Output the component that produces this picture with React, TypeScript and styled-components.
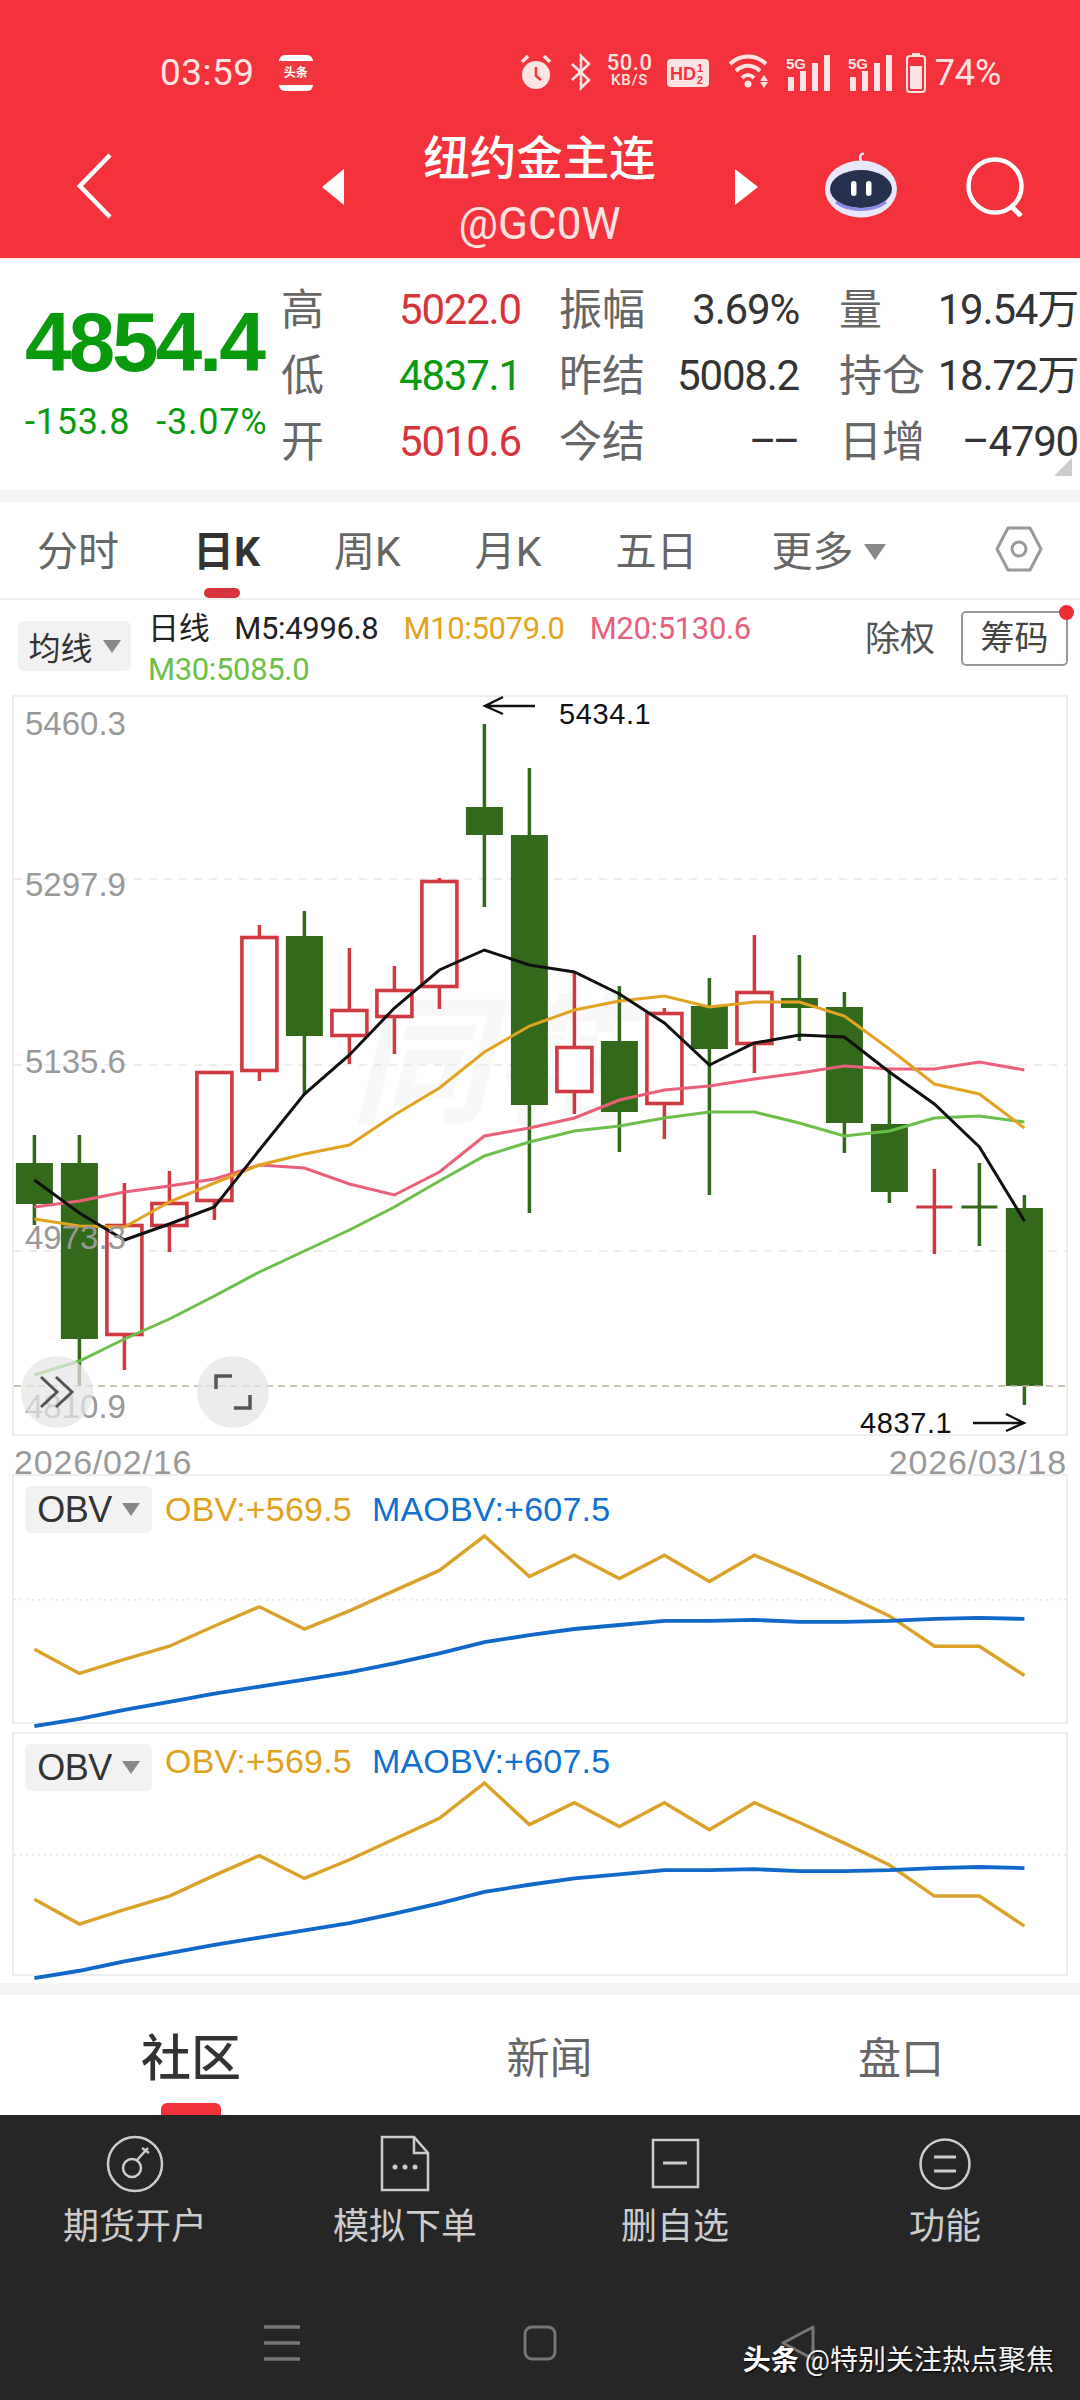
import React from "react";
import styled, { createGlobalStyle } from "styled-components";

const FONT = `Roboto, "Noto Sans CJK SC", sans-serif`;
const ARIAL = `"Liberation Sans", "Noto Sans CJK SC", sans-serif`;

const RED = "#f3323b";
const UP = "#d8343c";
const DOWN = "#099a0e";
const CANDLE_UP = "#cf3a41";
const CANDLE_DOWN = "#33691a";

const GlobalStyle = createGlobalStyle`
  html, body { margin: 0; padding: 0; background: #fff; }
  #root { width: 1080px; height: 2400px; overflow: hidden; }
  * { box-sizing: border-box; }
`;

const Page = styled.div`
  width: 1080px;
  height: 2400px;
  display: flex;
  flex-direction: column;
  font-family: ${FONT};
  background: #fff;
`;

/* 顶部红色区域 */
const Header = styled.header`
  height: 258px;
  background: ${RED};
  color: #fff;
`;

const StatusBar = styled.div`
  height: 112px;
  padding: 53px 0 0 160px;
  display: flex;
  align-items: flex-start;
  color: #fde3e3;
`;

const Clock = styled.span`
  font-size: 37px;
  line-height: 40px;
  letter-spacing: 0.5px;
`;

const NewsBadge = styled.div`
  width: 34px;
  height: 36px;
  margin: 2px 0 0 24px;
  border-radius: 6px;
  background: linear-gradient(#fff 0 18%, #ee3a3e 18% 82%, #fff 82%);
  color: #fff;
  font-size: 12px;
  line-height: 36px;
  font-weight: 700;
  text-align: center;
  white-space: nowrap;
`;

const StatusIcons = styled.div`
  margin-left: 207px;
  display: flex;
  align-items: flex-start;
`;

const NetSpeed = styled.div`
  width: 52px;
  margin-left: 11px;
  text-align: center;
  font-size: 22px;
  line-height: 19px;
  font-weight: 500;
  letter-spacing: 0.6px;
  white-space: nowrap;
  & > small {
    display: block;
    font-size: 15px;
    line-height: 17px;
    letter-spacing: 0.8px;
  }
`;

const Percent = styled.span`
  font-size: 36px;
  line-height: 40px;
  margin-left: 9px;
`;

const TitleRow = styled.div`
  height: 146px;
  padding-left: 77px;
  display: flex;
  align-items: flex-start;
`;

const TitleBlock = styled.div`
  width: 391px;
  padding-top: 23px;
  text-align: center;
`;

const Title = styled.div`
  font-size: 46.5px;
  line-height: 48px;
  font-weight: 500;
  white-space: nowrap;
`;

const SubTitle = styled.div`
  margin-top: 16px;
  font-size: 44px;
  line-height: 50px;
  color: #fbe3e3;
`;

const TopLine = styled.div`
  height: 2px;
  background: #faf1ef;
`;

/* 行情数字 */
const Quote = styled.section`
  height: 230px;
  padding-left: 25px;
  display: flex;
  position: relative;
`;

const QuoteMain = styled.div`
  width: 256px;
  padding-top: 42px;
  color: ${DOWN};
`;

const LastPrice = styled.div`
  font-size: 84px;
  line-height: 80px;
  font-weight: 700;
  letter-spacing: -3.2px;
  font-family: ${ARIAL};
  white-space: nowrap;
`;

const QuoteChange = styled.div`
  margin-top: 20px;
  display: flex;
  gap: 26px;
  font-size: 36px;
  line-height: 40px;
  letter-spacing: 0.8px;
  white-space: nowrap;
`;

const QuoteGrid = styled.div`
  padding-top: 17px;
  display: grid;
  grid-template-columns: 118px 160px 87px 193px 84px 155px;
  grid-auto-rows: 66px;
  align-items: center;
`;

const FieldLabel = styled.span`
  font-size: 43px;
  line-height: 66px;
  color: #666;
  white-space: nowrap;
`;

const FieldValue = styled.span<{ $color?: string; $gutter?: number }>`
  font-size: 42px;
  line-height: 66px;
  letter-spacing: -1.2px;
  word-spacing: -12px;
  color: ${(p) => p.$color || "#333"};
  text-align: ${(p) => (p.$color ? "left" : "right")};
  padding-right: ${(p) => p.$gutter || 0}px;
  white-space: nowrap;
`;

const CornerMark = styled.div`
  position: absolute;
  right: 8px;
  bottom: 14px;
  width: 0;
  height: 0;
  border-left: 18px solid transparent;
  border-bottom: 18px solid #ccc;
`;

const Band = styled.div`
  height: 12px;
  background: #f5f5f5;
`;

/* 周期切换 */
const PeriodTabs = styled.nav`
  height: 98px;
  padding: 4px 37px 0 37px;
  display: flex;
  align-items: center;
  gap: 74px;
  border-bottom: 2px solid #eee;
`;

const PeriodTab = styled.span<{ $active?: boolean }>`
  position: relative;
  font-size: 41px;
  line-height: 60px;
  color: ${(p) => (p.$active ? "#333" : "#666")};
  font-weight: ${(p) => (p.$active ? 700 : 400)};
  white-space: nowrap;
  &::after {
    content: "";
    display: ${(p) => (p.$active ? "block" : "none")};
    position: absolute;
    left: 11px;
    bottom: -16px;
    width: 36px;
    height: 10px;
    border-radius: 5px;
    background: ${UP};
  }
`;

const Caret = styled.i<{ $size?: number }>`
  display: inline-block;
  width: 0;
  height: 0;
  border-left: ${(p) => (p.$size || 10)}px solid transparent;
  border-right: ${(p) => (p.$size || 10)}px solid transparent;
  border-top: ${(p) => ((p.$size || 10) * 3) / 2}px solid #888;
`;

const MoreGroup = styled.span`
  display: flex;
  align-items: center;
  gap: 10px;
`;

const SettingsIcon = styled.svg`
  margin-left: auto;
  flex: none;
  margin-top: -6px;
`;

/* 均线图例 */
const LegendBar = styled.div`
  height: 95px;
  padding: 0 12px 0 18px;
  display: flex;
  align-items: flex-start;
`;

const SelectChip = styled.div<{ $w: number; $h: number; $mt: number; $fs?: number }>`
  width: ${(p) => p.$w}px;
  height: ${(p) => p.$h}px;
  margin-top: ${(p) => p.$mt}px;
  flex: none;
  border-radius: 6px;
  background: #f2f2f2;
  display: flex;
  align-items: center;
  justify-content: center;
  gap: 10px;
  font-size: ${(p) => p.$fs || 32}px;
  color: #333;
`;

const LegendText = styled.div`
  width: 680px;
  margin-left: 17px;
  padding-top: 8px;
  display: flex;
  flex-wrap: wrap;
  column-gap: 25px;
  font-size: 31px;
  line-height: 41px;
`;

const LegendItem = styled.span<{ $color: string }>`
  color: ${(p) => p.$color};
  white-space: nowrap;
  letter-spacing: -0.35px;
`;

const RightsLabel = styled.span`
  margin: 18px 0 0 auto;
  font-size: 35px;
  line-height: 44px;
  color: #555;
`;

const ChipButton = styled.div`
  position: relative;
  width: 107px;
  height: 55px;
  margin: 11px 0 0 26px;
  border: 2px solid #999;
  border-radius: 5px;
  font-size: 34px;
  line-height: 50px;
  text-align: center;
  color: #444;
  white-space: nowrap;
  &::after {
    content: "";
    position: absolute;
    top: -8px;
    right: -8px;
    width: 15px;
    height: 15px;
    border-radius: 50%;
    background: #ee2c35;
  }
`;

const ChartWrap = styled.div`
  padding: 0 12px;
`;

const KlineBox = styled.div`
  position: relative;
  width: 1056px;
  height: 741px;
  border: 2px solid #eee;
`;

const FullSvg = styled.svg`
  display: block;
  width: 100%;
  height: 100%;
  overflow: visible;
`;

const AxisLabel = styled.text`
  font-family: ${ARIAL};
  font-size: 33px;
  fill: #999;
`;

const ExtremeLabel = styled.text`
  font-family: ${ARIAL};
  font-size: 29px;
  letter-spacing: 0.6px;
  fill: #111;
`;

const WaterMark = styled.text`
  font-family: ${FONT};
  font-size: 140px;
  font-weight: 700;
  font-style: italic;
  fill: #f8f8f8;
`;

const RoundTool = styled.div<{ $left: number }>`
  position: absolute;
  left: ${(p) => p.$left}px;
  top: 659px;
  width: 72px;
  height: 72px;
  border-radius: 50%;
  background: rgba(228, 228, 228, 0.72);
  display: flex;
  align-items: center;
  justify-content: center;
`;

const DateRow = styled.div`
  height: 38px;
  padding: 8px 13px 0 14px;
  display: flex;
  justify-content: space-between;
  font-family: ${ARIAL};
  font-size: 34px;
  line-height: 36px;
  letter-spacing: 0.8px;
  color: #999;
`;

const IndicatorPane = styled.div<{ $h: number; $gap: number }>`
  height: ${(p) => p.$h}px;
  margin-bottom: ${(p) => p.$gap}px;
  border: 2px solid #eee;
  display: flex;
  flex-direction: column;
`;

const PaneLegend = styled.div<{ $shift: number }>`
  height: 56px;
  flex: none;
  padding-left: 11px;
  display: flex;
  align-items: flex-start;
  font-family: ${ARIAL};
  font-size: 34px;
  & > span {
    margin-top: ${(p) => p.$shift}px;
    line-height: 40px;
    white-space: nowrap;
  }
`;

const ObvName = styled.span`
  font-size: 36px;
  line-height: 47px;
  letter-spacing: -0.5px;
`;

const PaneValue = styled.span<{ $color: string; $ml: number }>`
  color: ${(p) => p.$color};
  margin-left: ${(p) => p.$ml}px;
  letter-spacing: 0.2px;
`;

const PaneSvg = styled.svg`
  display: block;
  flex: 1;
  min-height: 0;
  width: 100%;
  overflow: visible;
`;

/* 底部资讯切换 */
const NewsTabs = styled.nav`
  height: 120px;
  padding: 0 136px 0 141px;
  display: flex;
  justify-content: space-between;
  align-items: center;
`;

const NewsTab = styled.span<{ $active?: boolean }>`
  position: relative;
  height: 120px;
  padding-top: 34px;
  font-size: ${(p) => (p.$active ? 50 : 43)}px;
  line-height: 60px;
  font-weight: ${(p) => (p.$active ? 500 : 400)};
  color: ${(p) => (p.$active ? "#333" : "#666")};
  &::after {
    content: "";
    display: ${(p) => (p.$active ? "block" : "none")};
    position: absolute;
    left: 20px;
    bottom: 0;
    width: 60px;
    height: 12px;
    border-radius: 6px 6px 0 0;
    background: #f2323b;
  }
`;

const Dock = styled.footer`
  position: relative;
  flex: 1;
  background: #262626;
  color: #ccc;
`;

const DockGrid = styled.div`
  padding-top: 20px;
  display: grid;
  grid-template-columns: repeat(4, 270px);
`;

const DockItem = styled.div`
  display: flex;
  flex-direction: column;
  align-items: center;
`;

const DockIcon = styled.svg`
  display: block;
`;

const DockLabel = styled.span`
  margin-top: 12px;
  font-size: 36px;
  line-height: 44px;
  color: #ccc;
`;

const NavBar = styled.div`
  margin-top: 76px;
  padding-left: 264px;
  display: flex;
  gap: 223px;
`;

const Signature = styled.div`
  position: absolute;
  right: 26px;
  bottom: 21px;
  font-size: 28px;
  line-height: 36px;
  color: #f2f2f2;
  text-shadow: 1px 1px 2px #000;
  white-space: nowrap;
  & > b {
    color: #fff;
    font-weight: 700;
    margin-right: 6px;
  }
`;

// [wickTop, bodyTop, bodyBottom, wickBottom, up?]
type Candle = [number, number, number, number, boolean];

const candles: Candle[] = [
  [1135, 1163, 1204, 1225, false],
  [1135, 1163, 1339, 1386, false],
  [1183, 1224, 1336, 1370, true],
  [1171, 1202, 1227, 1252, true],
  [1071, 1071, 1202, 1220, true],
  [925, 936, 1072, 1081, true],
  [911, 936, 1036, 1095, false],
  [948, 1009, 1037, 1064, true],
  [966, 989, 1018, 1054, true],
  [878, 880, 988, 1009, true],
  [724, 807, 835, 907, false],
  [768, 835, 1105, 1213, false],
  [972, 1046, 1093, 1114, true],
  [986, 1041, 1112, 1152, false],
  [1008, 1012, 1105, 1139, true],
  [978, 1006, 1049, 1195, false],
  [935, 991, 1045, 1073, true],
  [955, 998, 1008, 1041, false],
  [992, 1007, 1123, 1153, false],
  [1070, 1124, 1192, 1203, false],
  [1169, 1207, 1207, 1254, true],
  [1163, 1207, 1207, 1246, false],
  [1195, 1208, 1386, 1405, false],
];

const m5 = [1180, 1213, 1240, 1224, 1207, 1150, 1094, 1055, 1008, 970, 950, 965, 972, 994, 1023, 1065, 1043, 1035, 1037, 1072, 1104, 1147, 1221];
const m10 = [1219, 1226, 1227, 1202, 1183, 1165, 1154, 1145, 1115, 1088, 1052, 1026, 1010, 1001, 996, 1007, 1002, 1002, 1016, 1049, 1084, 1094, 1128];
const m20 = [1207, 1201, 1192, 1186, 1179, 1165, 1168, 1184, 1195, 1172, 1136, 1128, 1118, 1100, 1090, 1086, 1079, 1073, 1066, 1069, 1069, 1062, 1070];
const m30 = [1375, 1361, 1339, 1319, 1296, 1272, 1251, 1230, 1207, 1181, 1156, 1142, 1131, 1126, 1118, 1112, 1112, 1123, 1136, 1131, 1118, 1116, 1122];

const obv = [1648, 1672, 1658, 1645, 1625, 1606, 1628, 1610, 1590, 1570, 1536, 1576, 1555, 1578, 1555, 1581, 1555, 1574, 1594, 1615, 1645, 1645, 1674];
const maobv = [1724, 1717, 1708, 1700, 1692, 1685, 1678, 1671, 1662, 1652, 1641, 1634, 1628, 1624, 1620, 1620, 1619, 1621, 1621, 1620, 1618, 1617, 1618];

const candleX = (i: number) => 34.4 + 45 * i;

const toPoints = (ys: number[], mapY: (y: number) => number, mapX: (x: number) => number = (x) => x) =>
  ys.map((y, i) => `${mapX(candleX(i)).toFixed(1)},${mapY(y).toFixed(1)}`).join(" ");

const KlineChart: React.FC = () => (
  <FullSvg viewBox="14 697 1052 737">
    <WaterMark x="350" y="1112">同花</WaterMark>
    {[879, 1065, 1251].map((y) => (
      <line key={y} x1="14" x2="1066" y1={y} y2={y} stroke="#e8e8e8" strokeWidth="1.5" strokeDasharray="8 7" />
    ))}
    {candles.map(([wt, bt, bb, wb, up], i) => {
      const x = candleX(i);
      const color = up ? CANDLE_UP : CANDLE_DOWN;
      return (
        <g key={i}>
          <line x1={x} x2={x} y1={wt} y2={bt} stroke={color} strokeWidth="3.5" />
          <line x1={x} x2={x} y1={bb} y2={wb} stroke={color} strokeWidth="3.5" />
          {bt === bb ? (
            <line x1={x - 18} x2={x + 18} y1={bt} y2={bt} stroke={color} strokeWidth="3" />
          ) : up ? (
            <rect x={x - 17.5} y={bt + 1.5} width="35" height={bb - bt - 3} fill="#fff" stroke={color} strokeWidth="3.6" />
          ) : (
            <rect x={x - 18.5} y={bt} width="37" height={bb - bt} fill={color} />
          )}
        </g>
      );
    })}
    <line x1="14" x2="1066" y1="1386" y2="1386" stroke="#b8b59c" strokeWidth="1.5" strokeDasharray="7 5" />
    <polyline points={toPoints(m30, (y) => y)} fill="none" stroke="#6cc04a" strokeWidth="3" />
    <polyline points={toPoints(m20, (y) => y)} fill="none" stroke="#ea5f7a" strokeWidth="3" />
    <polyline points={toPoints(m10, (y) => y)} fill="none" stroke="#e2a322" strokeWidth="3" />
    <polyline points={toPoints(m5, (y) => y)} fill="none" stroke="#111" strokeWidth="3" />

    <AxisLabel x="25" y="735">5460.3</AxisLabel>
    <AxisLabel x="25" y="896">5297.9</AxisLabel>
    <AxisLabel x="25" y="1073">5135.6</AxisLabel>
    <AxisLabel x="25" y="1249">4973.3</AxisLabel>
    <AxisLabel x="25" y="1418">4810.9</AxisLabel>

    <path d="M535 706 H485 M503 697 L485 706 L503 714" fill="none" stroke="#111" strokeWidth="2.4" />
    <ExtremeLabel x="559" y="724">5434.1</ExtremeLabel>
    <ExtremeLabel x="860" y="1433">4837.1</ExtremeLabel>
    <path d="M973 1423 H1024 M1006 1414 L1024 1423 L1006 1431" fill="none" stroke="#111" strokeWidth="2.4" />
  </FullSvg>
);

const ObvPane: React.FC<{ h: number; gap: number; scale: number; gridY: number; shift: number }> = ({ h, gap, scale, gridY, shift }) => {
  // 两个副图数据相同，只是纵向比例略有差别
  const mapY = (y: number) => h - (1724 - y) * scale;
  const mapX = (x: number) => x - 14;
  return (
    <IndicatorPane $h={h} $gap={gap}>
      <PaneLegend $shift={shift}>
        <SelectChip $w={127} $h={47} $mt={10} $fs={36}>
          <ObvName>OBV</ObvName>
          <Caret $size={9} />
        </SelectChip>
        <PaneValue $color="#e0a21c" $ml={13}>OBV:+569.5</PaneValue>
        <PaneValue $color="#1070d0" $ml={20}>MAOBV:+607.5</PaneValue>
      </PaneLegend>
      <PaneSvg viewBox={`0 58 1052 ${h - 62}`} preserveAspectRatio="none">
        <line x1="0" x2="1052" y1={gridY} y2={gridY} stroke="#e4e4e4" strokeWidth="1.5" strokeDasharray="2 4" />
        <polyline points={toPoints(obv, mapY, mapX)} fill="none" stroke="#dba229" strokeWidth="3.4" />
        <polyline points={toPoints(maobv, mapY, mapX)} fill="none" stroke="#1068c8" strokeWidth="3.8" />
      </PaneSvg>
    </IndicatorPane>
  );
};

const Signal: React.FC<{ ml: number }> = ({ ml }) => (
  <svg width="46" height="40" viewBox="0 0 46 40" style={{ marginLeft: ml }}>
    <text x="0" y="16" fontSize="15" fontWeight="700" fontFamily={ARIAL} fill="#fde3e3">5G</text>
    <g fill="#fde3e3">
      <rect x="2" y="24" width="6" height="14" />
      <rect x="14" y="18" width="6" height="20" />
      <rect x="26" y="10" width="6" height="28" />
      <rect x="38" y="2" width="6" height="36" />
    </g>
  </svg>
);

const App: React.FC = () => {
  return (
    <Page>
      <GlobalStyle />
      <Header>
        <StatusBar>
          <Clock>03:59</Clock>
          <NewsBadge>头条</NewsBadge>
          <StatusIcons>
            {/* alarm */}
            <svg width="32" height="38" viewBox="0 0 32 38">
              <circle cx="16" cy="22" r="14" fill="#fde3e3" />
              <path d="M16 14v9l5 4" fill="none" stroke={RED} strokeWidth="2.5" />
              <path d="M2 9 8 3M30 9 24 3" stroke="#fde3e3" strokeWidth="3.5" />
            </svg>
            {/* bluetooth */}
            <svg width="24" height="38" viewBox="0 0 24 38" style={{ marginLeft: 17 }}>
              <path d="M3 11 20 27 12 35V3L20 11 3 27" fill="none" stroke="#fde3e3" strokeWidth="2.6" />
            </svg>
            <NetSpeed>
              50.0
              <small>KB/S</small>
            </NetSpeed>
            {/* HD */}
            <svg width="42" height="30" viewBox="0 0 42 30" style={{ marginLeft: 11, marginTop: 6 }}>
              <rect width="42" height="28" rx="4" fill="#fde3e3" />
              <text x="3" y="21" fontSize="18" fontWeight="700" fontFamily={ARIAL} fill={RED}>HD</text>
              <text x="30" y="13" fontSize="11" fontWeight="700" fontFamily={ARIAL} fill={RED}>1</text>
              <text x="30" y="25" fontSize="11" fontWeight="700" fontFamily={ARIAL} fill={RED}>2</text>
            </svg>
            {/* wifi */}
            <svg width="44" height="36" viewBox="0 0 44 36" style={{ marginLeft: 19 }}>
              <g fill="none" stroke="#fde3e3" strokeWidth="4">
                <path d="M2 11C12 1 28 1 38 11" />
                <path d="M8 18C15 11 25 11 32 18" />
                <path d="M14 25C18 21 22 21 26 25" />
              </g>
              <circle cx="20" cy="31" r="3.5" fill="#fde3e3" />
              <path d="M36 22l4 6h-8zM32 29h8l-4 6z" fill="#fde3e3" />
            </svg>
            <Signal ml={14} />
            <Signal ml={16} />
            {/* battery */}
            <svg width="20" height="40" viewBox="0 0 20 40" style={{ marginLeft: 12 }}>
              <rect x="6" y="0" width="8" height="3" fill="#fde3e3" />
              <rect x="1" y="3" width="18" height="36" rx="3" fill="none" stroke="#fde3e3" strokeWidth="2" />
              <rect x="4" y="13" width="12" height="23" rx="1" fill="#fde3e3" />
            </svg>
            <Percent>74%</Percent>
          </StatusIcons>
        </StatusBar>
        <TitleRow>
          <svg width="35" height="66" viewBox="0 0 35 66" style={{ marginTop: 41 }}>
            <path d="M33 2 3 33 33 64" fill="none" stroke="#fff" strokeWidth="4.5" />
          </svg>
          <svg width="22" height="36" viewBox="0 0 22 36" style={{ marginLeft: 210, marginTop: 57 }}>
            <path d="M22 0V36L0 18Z" fill="#fff" />
          </svg>
          <TitleBlock>
            <Title>纽约金主连</Title>
            <SubTitle>@GC0W</SubTitle>
          </TitleBlock>
          <svg width="23" height="36" viewBox="0 0 23 36" style={{ marginTop: 57 }}>
            <path d="M0 0V36L23 18Z" fill="#fff" />
          </svg>
          {/* robot */}
          <svg width="72" height="66" viewBox="0 0 72 66" style={{ marginLeft: 67, marginTop: 40 }}>
            <path d="M36 9C34 4 36 1 39 2" fill="none" stroke="#e8e6ff" strokeWidth="2.5" />
            <ellipse cx="36" cy="37" rx="36" ry="28.5" fill="#e9e7fb" />
            <ellipse cx="36" cy="37" rx="31" ry="19" fill="#263150" />
            <path d="M11 50C24 60 48 60 61 50" fill="none" stroke="#8c8ae8" strokeWidth="3" />
            <rect x="26" y="29" width="5.5" height="15" rx="2.7" fill="#fff" />
            <rect x="41" y="29" width="5.5" height="15" rx="2.7" fill="#fff" />
          </svg>
          {/* search */}
          <svg width="60" height="60" viewBox="0 0 60 60" style={{ marginLeft: 69, marginTop: 45 }}>
            <circle cx="29" cy="29" r="26.5" fill="none" stroke="#fff" strokeWidth="4.5" />
            <path d="M44 48 55 59" stroke="#fff" strokeWidth="5" />
          </svg>
        </TitleRow>
      </Header>
      <TopLine />

      <Quote>
        <QuoteMain>
          <LastPrice>4854.4</LastPrice>
          <QuoteChange>
            <span>-153.8</span>
            <span>-3.07%</span>
          </QuoteChange>
        </QuoteMain>
        <QuoteGrid>
          <FieldLabel>高</FieldLabel>
          <FieldValue $color={UP}>5022.0</FieldValue>
          <FieldLabel>振幅</FieldLabel>
          <FieldValue $gutter={40}>3.69%</FieldValue>
          <FieldLabel>量</FieldLabel>
          <FieldValue>19.54万</FieldValue>

          <FieldLabel>低</FieldLabel>
          <FieldValue $color={DOWN}>4837.1</FieldValue>
          <FieldLabel>昨结</FieldLabel>
          <FieldValue $gutter={40}>5008.2</FieldValue>
          <FieldLabel>持仓</FieldLabel>
          <FieldValue>18.72万</FieldValue>

          <FieldLabel>开</FieldLabel>
          <FieldValue $color={UP}>5010.6</FieldValue>
          <FieldLabel>今结</FieldLabel>
          <FieldValue $gutter={40}>– –</FieldValue>
          <FieldLabel>日增</FieldLabel>
          <FieldValue>–4790</FieldValue>
        </QuoteGrid>
        <CornerMark />
      </Quote>
      <Band />

      <PeriodTabs>
        <PeriodTab>分时</PeriodTab>
        <PeriodTab $active>日K</PeriodTab>
        <PeriodTab>周K</PeriodTab>
        <PeriodTab>月K</PeriodTab>
        <PeriodTab>五日</PeriodTab>
        <MoreGroup>
          <PeriodTab>更多</PeriodTab>
          <Caret $size={11} />
        </MoreGroup>
        <SettingsIcon width="48" height="46" viewBox="0 0 48 46">
          <path d="M13 2H35L46 23 35 44H13L2 23Z" fill="none" stroke="#999" strokeWidth="3" strokeLinejoin="round" />
          <circle cx="24" cy="23" r="7" fill="none" stroke="#999" strokeWidth="3" />
        </SettingsIcon>
      </PeriodTabs>

      <LegendBar>
        <SelectChip $w={113} $h={50} $mt={21}>
          均线
          <Caret $size={9} />
        </SelectChip>
        <LegendText>
          <LegendItem $color="#222">日线</LegendItem>
          <LegendItem $color="#222">M5:4996.8</LegendItem>
          <LegendItem $color="#e2a322">M10:5079.0</LegendItem>
          <LegendItem $color="#e8607c">M20:5130.6</LegendItem>
          <LegendItem $color="#6cc04a">M30:5085.0</LegendItem>
        </LegendText>
        <RightsLabel>除权</RightsLabel>
        <ChipButton>筹码</ChipButton>
      </LegendBar>

      <ChartWrap>
        <KlineBox>
          <KlineChart />
          <RoundTool $left={7}>
            <svg width="36" height="34" viewBox="0 0 36 34">
              <path d="M2 2 18 17 2 32M17 2 33 17 17 32" fill="none" stroke="#555" strokeWidth="3" />
            </svg>
          </RoundTool>
          <RoundTool $left={183}>
            <svg width="38" height="38" viewBox="0 0 38 38">
              <path d="M2 16V3H18M36 22V35H20" fill="none" stroke="#555" strokeWidth="3.5" />
            </svg>
          </RoundTool>
        </KlineBox>
      </ChartWrap>
      <DateRow>
        <span>2026/02/16</span>
        <span>2026/03/18</span>
      </DateRow>
      <ChartWrap>
        <ObvPane h={250} gap={8} scale={1} gridY={125} shift={13} />
        <ObvPane h={244} gap={7} scale={1.026} gridY={122} shift={7} />
      </ChartWrap>
      <Band />

      <NewsTabs>
        <NewsTab $active>社区</NewsTab>
        <NewsTab>新闻</NewsTab>
        <NewsTab>盘口</NewsTab>
      </NewsTabs>

      <Dock>
        <DockGrid>
          <DockItem>
            <DockIcon width="58" height="58" viewBox="0 0 58 58">
              <circle cx="29" cy="29" r="27" fill="none" stroke="#ccc" strokeWidth="2.5" />
              <circle cx="26" cy="33" r="9" fill="none" stroke="#ccc" strokeWidth="2.5" />
              <path d="M31 25 42 13M36 13l7 5" fill="none" stroke="#ccc" strokeWidth="2.5" />
            </DockIcon>
            <DockLabel>期货开户</DockLabel>
          </DockItem>
          <DockItem>
            <DockIcon width="58" height="58" viewBox="0 0 58 58">
              <path d="M6 2H38L52 18V55H6Z" fill="none" stroke="#ccc" strokeWidth="2.5" />
              <path d="M38 2V18H52" fill="none" stroke="#ccc" strokeWidth="2.5" />
              <circle cx="19" cy="32" r="2.5" fill="#ccc" />
              <circle cx="29" cy="32" r="2.5" fill="#ccc" />
              <circle cx="39" cy="32" r="2.5" fill="#ccc" />
            </DockIcon>
            <DockLabel>模拟下单</DockLabel>
          </DockItem>
          <DockItem>
            <DockIcon width="58" height="58" viewBox="0 0 58 58">
              <rect x="7" y="5" width="45" height="47" fill="none" stroke="#ccc" strokeWidth="2.5" />
              <path d="M17 28H41" stroke="#ccc" strokeWidth="3" />
            </DockIcon>
            <DockLabel>删自选</DockLabel>
          </DockItem>
          <DockItem>
            <DockIcon width="58" height="58" viewBox="0 0 58 58">
              <circle cx="29" cy="29" r="24.5" fill="none" stroke="#ccc" strokeWidth="2.5" />
              <path d="M18 22H40M18 36H40" stroke="#ccc" strokeWidth="3" />
            </DockIcon>
            <DockLabel>功能</DockLabel>
          </DockItem>
        </DockGrid>
        <NavBar>
          <svg width="36" height="36" viewBox="0 0 36 36">
            <path d="M0 2H36M0 18H36M0 34H36" stroke="#777" strokeWidth="3.5" />
          </svg>
          <svg width="34" height="36" viewBox="0 0 34 36">
            <rect x="2" y="2" width="30" height="32" rx="7" fill="none" stroke="#777" strokeWidth="3" />
          </svg>
          <svg width="36" height="36" viewBox="0 0 36 36">
            <path d="M33 2V34L3 18Z" fill="none" stroke="#777" strokeWidth="3" strokeLinejoin="round" />
          </svg>
        </NavBar>
        <Signature>
          <b>头条</b>@特别关注热点聚焦
        </Signature>
      </Dock>
    </Page>
  );
};

export default App;
